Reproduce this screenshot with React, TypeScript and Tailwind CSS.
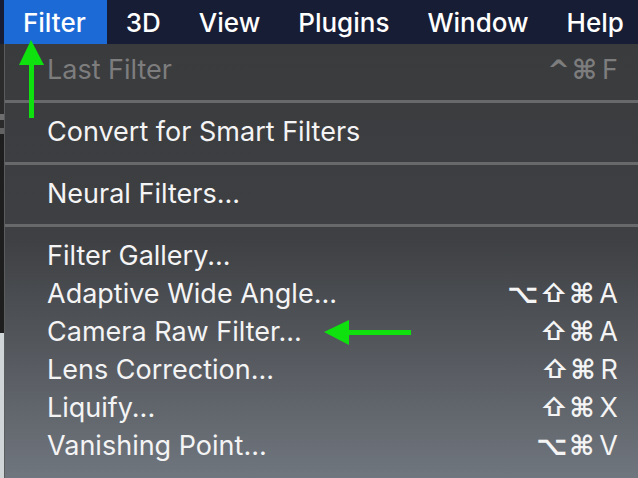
const font = { fontFamily: 'Inter, "DejaVu Sans", sans-serif' };

type Item = { label: string; keys?: string[]; disabled?: boolean };

const groups: Item[][] = [
  [{ label: 'Last Filter', keys: ['^', '⌘', 'F'], disabled: true }],
  [{ label: 'Convert for Smart Filters' }],
  [{ label: 'Neural Filters...' }],
  [
    { label: 'Filter Gallery...' },
    { label: 'Adaptive Wide Angle...', keys: ['⌥', '⇧', '⌘', 'A'] },
    { label: 'Camera Raw Filter...', keys: ['⇧', '⌘', 'A'] },
    { label: 'Lens Correction...', keys: ['⇧', '⌘', 'R'] },
    { label: 'Liquify...', keys: ['⇧', '⌘', 'X'] },
    { label: 'Vanishing Point...', keys: ['⌥', '⌘', 'V'] },
  ],
];

const menus = ['Filter', '3D', 'View', 'Plugins', 'Window', 'Help'];

function Key({ k }: { k: string }) {
  if (/[A-Z]/.test(k)) return <span className="ml-[3px]">{k}</span>;
  if (k === '⇧') return <span className="text-[25px] font-semibold">{k}</span>;
  return <span className="text-[27px] font-bold font-['DejaVu_Sans']">{k}</span>;
}

function Row({ item }: { item: Item }) {
  return (
    <div
      className={`h-[38px] flex items-center justify-between pl-[42px] pr-[20px] text-[27px] leading-none ${
        item.disabled ? 'text-[#7d7d7e]' : 'text-[#f4f4f5]'
      }`}
    >
      <span>{item.label}</span>
      {item.keys && (
        <span className="flex items-center gap-[2px]">
          {item.keys.map((k, i) => (
            <Key key={i} k={k} />
          ))}
        </span>
      )}
    </div>
  );
}

export default function App() {
  return (
    <div className="relative w-[638px] h-[478px] overflow-hidden flex flex-col antialiased" style={font}>
      {/* menu bar */}
      <div className="h-[44px] bg-[#171d34] flex pl-[4px] text-white text-[26px] font-medium">
        {menus.map((m, i) => (
          <div
            key={m}
            className={`h-full flex items-center px-[19px] ${i === 0 ? 'bg-[#1c6ad6] pr-[21px]' : ''}`}
          >
            {m}
          </div>
        ))}
      </div>

      <div className="flex-1 flex">
        {/* window behind */}
        <div className="w-[4px] flex flex-col bg-[#2b2b2c]">
          <div className="h-[70px]" />
          <div className="h-[6px] bg-[#6e6e6e]" />
          <div className="h-[8px]" />
          <div className="h-[6px] bg-[#626262]" />
          <div className="h-[199px] bg-[#1e1e1f]" />
          <div className="flex-1 bg-[#d0d5d8]" />
        </div>

        {/* dropdown */}
        <div className="flex-1 border-l border-[#5b5c5e] bg-linear-to-b from-[#3a3b3d] via-[#3e4043] via-45% to-[#70767e] pt-[6px]">
          {groups.map((g, gi) => (
            <div key={gi}>
              {gi > 0 && (
                <div className="pt-[12px] pb-[9px]">
                  <div className="h-[3px] bg-[#68696b]" />
                </div>
              )}
              {g.map((item) => (
                <Row key={item.label} item={item} />
              ))}
            </div>
          ))}
        </div>
      </div>

      {/* annotation arrows */}
      <svg className="absolute left-0 top-0" width="638" height="478">
        <polygon points="31,40 19,65 44,65" fill="#0ee10e" />
        <rect x="29" y="62" width="5" height="56" fill="#0ee10e" />
        <polygon points="324,332 349,320 349,345" fill="#0ee10e" />
        <rect x="346" y="330" width="65" height="5" fill="#0ee10e" />
      </svg>
    </div>
  );
}
